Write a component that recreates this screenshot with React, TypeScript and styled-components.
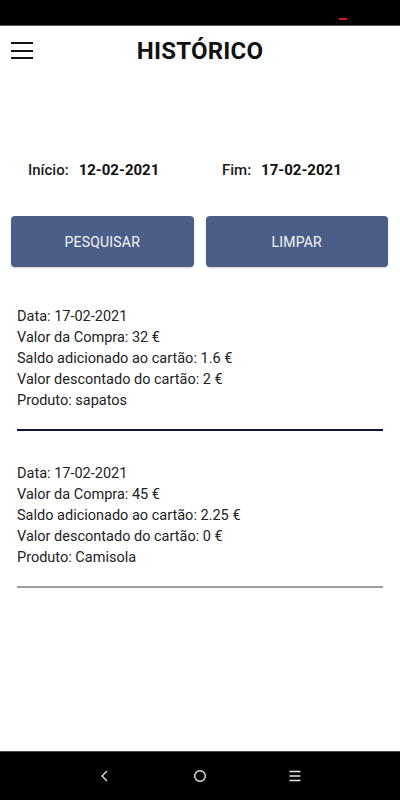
import React from 'react'
import styled, { createGlobalStyle } from 'styled-components'

const GlobalStyle = createGlobalStyle`
  html, body {
    margin: 0;
    padding: 0;
    background: #ffffff;
  }
  body {
    font-family: Roboto, "Liberation Sans", sans-serif;
    color: #1e1e1e;
  }
`

const Screen = styled.div`
  display: flex;
  flex-direction: column;
  height: 800px;
  width: 400px;
  overflow: hidden;
`

const StatusBar = styled.div`
  height: 26px;
  flex: none;
  background: #000;
  border-bottom: 1px solid #5a5a5a;
  box-sizing: border-box;
  display: flex;
  justify-content: flex-end;
  align-items: flex-end;
  padding: 0 53px 5px 0;
`

const RecordDot = styled.span`
  display: block;
  width: 8px;
  height: 2px;
  background: #d11a1a;
`

const Main = styled.div`
  flex: 1;
  display: flex;
  flex-direction: column;
`

const Header = styled.div`
  position: relative;
  height: 50px;
  display: flex;
  align-items: center;
  justify-content: center;
`

const MenuButton = styled.button`
  position: absolute;
  left: 11px;
  top: 16px;
  width: 22px;
  height: 17px;
  padding: 0;
  border: none;
  background: transparent;
  display: flex;
  flex-direction: column;
  justify-content: space-between;
`

const MenuBar = styled.span`
  display: block;
  height: 2px;
  width: 22px;
  background: #111;
`

const Title = styled.h1`
  margin: 0;
  font-size: 24px;
  font-weight: 700;
  letter-spacing: 0.2px;
  color: #111;
`

const DateRow = styled.div`
  margin-top: 80px;
  height: 28px;
  display: grid;
  grid-template-columns: 194px 1fr;
  padding-left: 28px;
  align-items: center;
`

const DateField = styled.div`
  display: flex;
  align-items: center;
  gap: 10px;
`

const DateLabel = styled.span`
  font-size: 15px;
  font-weight: 500;
  color: #1a1a1a;
`

const DateValue = styled.span`
  font-size: 15px;
  font-weight: 700;
  color: #111;
`

const ButtonRow = styled.div`
  margin-top: 32px;
  display: grid;
  grid-template-columns: 1fr 1fr;
  gap: 12px;
  padding: 0 12px 0 11px;
`

const ActionButton = styled.button`
  height: 51px;
  border: none;
  border-radius: 4px;
  background: #4b5e87;
  color: #f4f6fa;
  font-family: Roboto, "Liberation Sans", sans-serif;
  font-size: 14px;
  font-weight: 400;
  letter-spacing: 0.2px;
  text-transform: uppercase;
  box-shadow: 0 1px 2px rgba(0, 0, 0, 0.2);
`

const EntryList = styled.div`
  margin-top: 39px;
  padding: 0 17px;
  display: flex;
  flex-direction: column;
`

const Entry = styled.div<{ $first?: boolean }>`
  margin-top: ${({ $first }) => ($first ? '0' : '32px')};
`

const EntryLine = styled.div`
  font-size: 14.5px;
  line-height: 21px;
  color: #222;
`

const Divider = styled.div<{ $dark?: boolean }>`
  margin-top: 18px;
  height: 2px;
  background: ${({ $dark }) => ($dark ? '#14143a' : '#9aa0a6')};
`

const NavBar = styled.div`
  height: 49px;
  flex: none;
  background: #000;
  border-top: 1px solid #4a4a4a;
  box-sizing: border-box;
  display: flex;
  align-items: center;
  justify-content: center;
  gap: 79px;
`

const NavIcon = styled.svg`
  width: 16px;
  height: 16px;
  display: block;
`

type Purchase = {
  date: string
  amount: string
  added: string
  discounted: string
  product: string
}

const purchases: Purchase[] = [
  { date: '17-02-2021', amount: '32', added: '1.6', discounted: '2', product: 'sapatos' },
  { date: '17-02-2021', amount: '45', added: '2.25', discounted: '0', product: 'Camisola' },
]

const App: React.FC = () => {
  return (
    <>
      <GlobalStyle />
      <Screen>
        <StatusBar>
          <RecordDot />
        </StatusBar>
        <Main>
          <Header>
            <MenuButton aria-label="menu">
              <MenuBar />
              <MenuBar />
              <MenuBar />
            </MenuButton>
            <Title>HISTÓRICO</Title>
          </Header>

          <DateRow>
            <DateField>
              <DateLabel>Início:</DateLabel>
              <DateValue>12-02-2021</DateValue>
            </DateField>
            <DateField>
              <DateLabel>Fim:</DateLabel>
              <DateValue>17-02-2021</DateValue>
            </DateField>
          </DateRow>

          <ButtonRow>
            <ActionButton>Pesquisar</ActionButton>
            <ActionButton>Limpar</ActionButton>
          </ButtonRow>

          <EntryList>
            {purchases.map((p, i) => (
              <Entry key={i} $first={i === 0}>
                <EntryLine>Data: {p.date}</EntryLine>
                <EntryLine>Valor da Compra: {p.amount} €</EntryLine>
                <EntryLine>Saldo adicionado ao cartão: {p.added} €</EntryLine>
                <EntryLine>Valor descontado do cartão: {p.discounted} €</EntryLine>
                <EntryLine>Produto: {p.product}</EntryLine>
                <Divider $dark={i === 0} />
              </Entry>
            ))}
          </EntryList>
        </Main>
        <NavBar>
          <NavIcon viewBox="0 0 16 16">
            <path d="M10 3 L5 8 L10 13" fill="none" stroke="#e6e6e6" strokeWidth="1.4" />
          </NavIcon>
          <NavIcon viewBox="0 0 16 16">
            <circle cx="8" cy="8" r="5.3" fill="none" stroke="#e6e6e6" strokeWidth="1.4" />
          </NavIcon>
          <NavIcon viewBox="0 0 16 16">
            <path d="M2.5 3.5 H13.5 M2.5 8 H13.5 M2.5 12.5 H13.5" fill="none" stroke="#e6e6e6" strokeWidth="1.3" />
          </NavIcon>
        </NavBar>
      </Screen>
    </>
  )
}

export default App
